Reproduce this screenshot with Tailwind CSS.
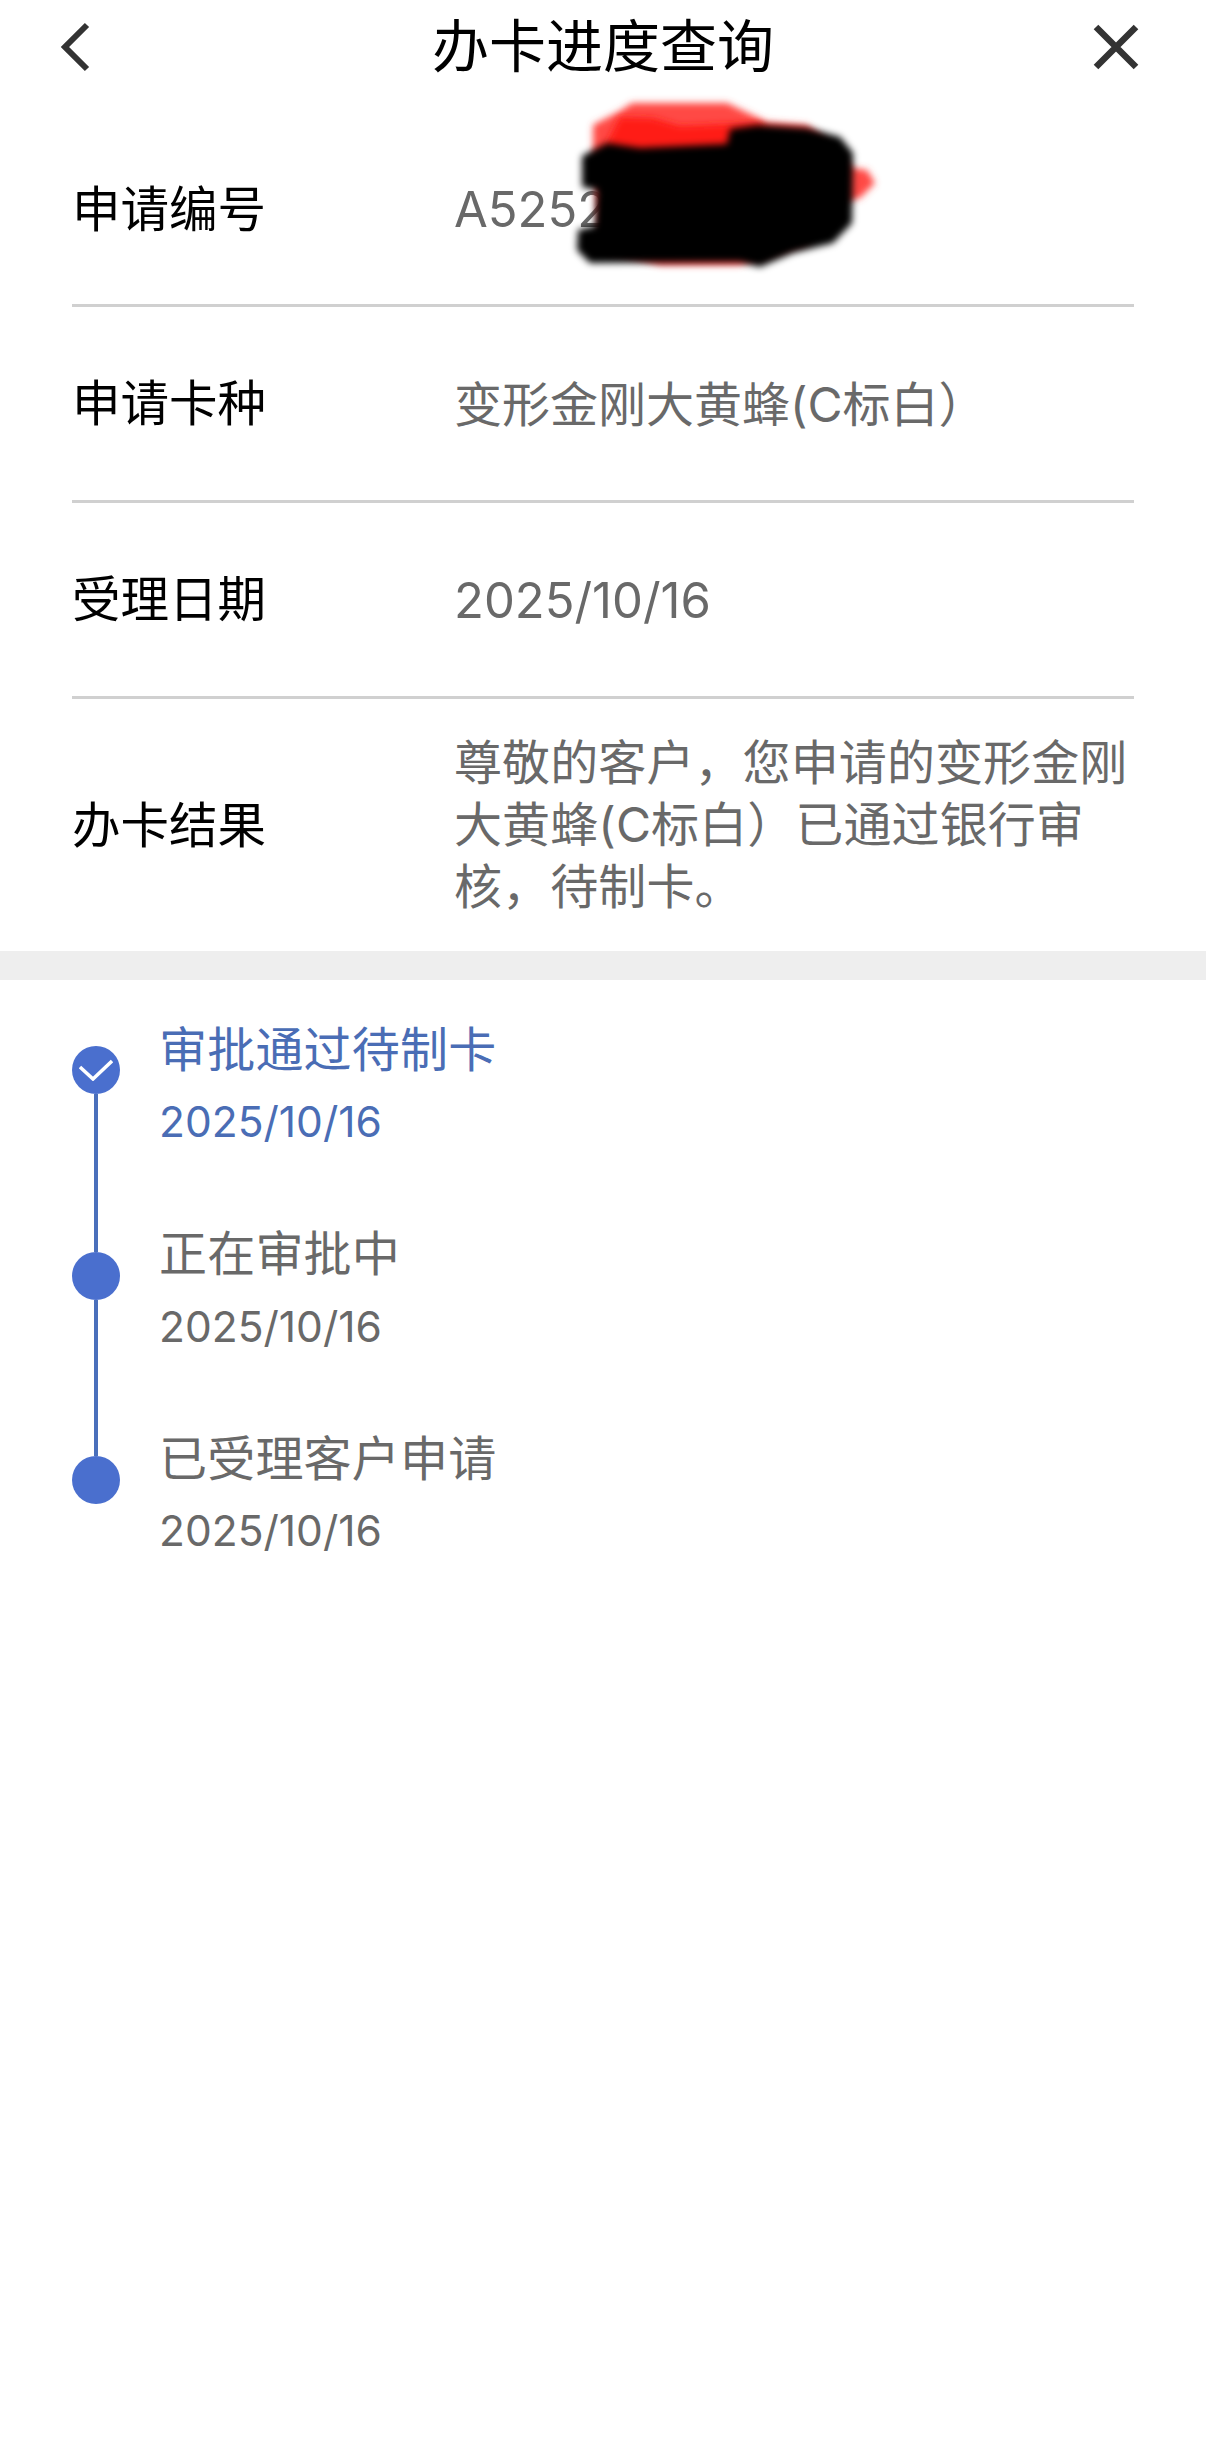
<!doctype html>
<html lang="zh">
<head>
<meta charset="utf-8">
<script src="https://cdn.jsdelivr.net/npm/@tailwindcss/browser@4"></script>
</head>
<body class="bg-white">
<div class="relative w-[1206px] h-[2440px] overflow-hidden bg-white font-['Inter','Noto_Sans_CJK_SC',sans-serif]">
  <header class="relative flex items-center justify-between h-[94px] pl-[58px] pr-[67px]">
    <svg class="w-[34px] h-[50px]" viewBox="0 0 34 50" fill="none" stroke="#333" stroke-width="6"><path d="M29 3 L7 25 L29 47"/></svg>
    <h1 class="absolute left-0 right-0 text-center text-[57px] leading-[94px] text-black">办卡进度查询</h1>
    <svg class="w-[46px] h-[46px]" viewBox="0 0 46 46" fill="none" stroke="#333" stroke-width="6.5"><path d="M3 3 L43 43 M43 3 L3 43"/></svg>
  </header>

  <section class="px-[72px]">
    <div class="flex items-center h-[213px] pt-[22px] border-b-[3px] border-[#d0d0d0]">
      <div class="w-[382px] text-[48.5px] text-black">申请编号</div>
      <div class="text-[49px] text-[#696969]">A5252</div>
    </div>
    <div class="flex items-center h-[196px] pt-[2px] border-b-[3px] border-[#d0d0d0]">
      <div class="w-[382px] text-[48.5px] text-black">申请卡种</div>
      <div class="text-[48px] text-[#696969]">变形金刚大黄蜂(C标白）</div>
    </div>
    <div class="flex items-center h-[196px] pt-[2px] border-b-[3px] border-[#d0d0d0]">
      <div class="w-[382px] text-[48.5px] text-black">受理日期</div>
      <div class="text-[49px] text-[#696969]">2025/10/16</div>
    </div>
    <div class="flex items-center h-[252px]">
      <div class="w-[382px] shrink-0 pt-[3px] text-[48.5px] text-black">办卡结果</div>
      <div class="text-[48px] leading-[62px] tracking-[0.1px] text-[#696969]">尊敬的客户，您申请的变形金刚<br>大黄蜂(C标白）已通过银行审<br>核，待制卡。</div>
    </div>
  </section>

  <div class="h-[29px] bg-[#eeeeee]"></div>

  <section class="pt-[39px] pl-[72px]">
    <div class="flex h-[204px]">
      <div class="flex flex-col items-center w-[48px] mr-[39px]">
        <div class="h-[27px]"></div>
        <div class="flex items-center justify-center w-[48px] h-[48px] shrink-0 rounded-full bg-[#4a6fce]">
          <svg class="w-[34px] h-[22px]" viewBox="0 0 34 22" fill="none" stroke="#fff" stroke-width="3.5"><path d="M1 8 L14 20 L33 2"/></svg>
        </div>
        <div class="flex-1 w-[4px] bg-[#4a6fbb]"></div>
      </div>
      <div class="text-[#4a6db5]">
        <div class="text-[48px] leading-[62px] tracking-[0.2px]">审批通过待制卡</div>
        <div class="mt-[10px] text-[42.5px] leading-[62px]">2025/10/16</div>
      </div>
    </div>
    <div class="flex h-[205px]">
      <div class="flex flex-col items-center w-[48px] mr-[39px]">
        <div class="h-[29px] w-[4px] bg-[#4a6fbb]"></div>
        <div class="w-[48px] h-[48px] shrink-0 rounded-full bg-[#4a6fce]"></div>
        <div class="flex-1 w-[4px] bg-[#4a6fbb]"></div>
      </div>
      <div class="text-[#696969]">
        <div class="text-[48px] leading-[62px] tracking-[0.2px]">正在审批中</div>
        <div class="mt-[11px] text-[42.5px] leading-[62px]">2025/10/16</div>
      </div>
    </div>
    <div class="flex h-[204px]">
      <div class="flex flex-col items-center w-[48px] mr-[39px]">
        <div class="h-[28px] w-[4px] bg-[#4a6fbb]"></div>
        <div class="w-[48px] h-[48px] shrink-0 rounded-full bg-[#4a6fce]"></div>
      </div>
      <div class="text-[#696969]">
        <div class="text-[48px] leading-[62px] tracking-[0.2px]">已受理客户申请</div>
        <div class="mt-[10px] text-[42.5px] leading-[62px]">2025/10/16</div>
      </div>
    </div>
  </section>

  <svg class="absolute left-[560px] top-[80px] w-[340px] h-[210px]" viewBox="560 80 340 210">
    <defs>
      <filter id="a" x="-20%" y="-20%" width="140%" height="140%"><feGaussianBlur stdDeviation="3.5"/></filter>
    </defs>
    <path filter="url(#a)" fill="#ff4a44" d="M593 125 L620 111 L632 103 L727 103 L767 122 L807 125 L820 135 L853 168 L867 170 L875 183 L860 198 L835 205 L807 243 L740 265 L660 265 L600 250 L593 155 Z"/>
    <path filter="url(#a)" fill="#ff1a12" d="M603 150 L620 117 L653 118 L680 126 L727 124 L760 123 L775 145 L780 200 L640 210 Z"/>
    <path filter="url(#a)" fill="#000" d="M582 156 L607 143 L640 148 L727 144 L730 129 L757 125 L807 128 L840 137 L853 153 L852 223 L833 243 L793 253 L760 267 L740 262 L590 263 L577 250 L578 230 L595 226 L597 190 L582 187 Z"/>
  </svg>
</div>
</body>
</html>
